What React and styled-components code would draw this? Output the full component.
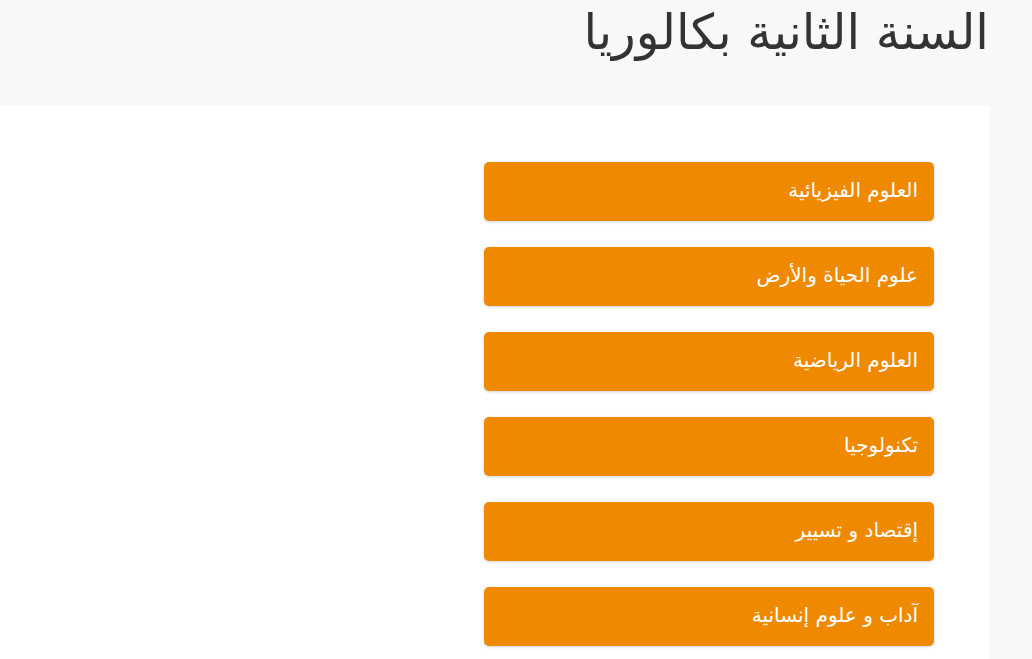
import styled, { createGlobalStyle } from 'styled-components';

const GlobalStyle = createGlobalStyle`
  body {
    margin: 0;
    background: #f8f8f8;
    font-family: "DejaVu Sans", "Noto Sans", sans-serif;
    overflow: hidden;
  }
`;

const Page = styled.div`
  direction: rtl;
  height: 659px;
  padding-right: 43px;
  overflow: hidden;
`;

const Header = styled.header`
  height: 106px;
`;

const Title = styled.h1`
  margin: 0;
  padding-top: 3px;
  font-size: 49px;
  font-weight: normal;
  color: #333;
  line-height: 60px;
`;

const Panel = styled.section`
  background: #fff;
  height: 553px;
  margin-right: -1px;
  box-sizing: border-box;
  padding: 56px 56px 0 0;
  display: flex;
  flex-direction: column;
  gap: 26px;
`;

const SubjectButton = styled.a`
  display: flex;
  align-items: center;
  flex: none;
  width: 450px;
  height: 59px;
  box-sizing: border-box;
  padding: 0 16px 3px 0;
  background: #ef8a00;
  border-radius: 5px;
  box-shadow: 0 1px 3px rgba(0, 0, 0, 0.18);
  color: #fff;
  font-size: 20px;
  text-decoration: none;
  cursor: pointer;
`;

const subjects = [
  'العلوم الفيزيائية',
  'علوم الحياة والأرض',
  'العلوم الرياضية',
  'تكنولوجيا',
  'إقتصاد و تسيير',
  'آداب و علوم إنسانية',
];

const App = () => {
  return (
    <>
      <GlobalStyle />
      <Page>
        <Header>
          <Title>السنة الثانية بكالوريا</Title>
        </Header>
        <Panel>
          {subjects.map((s) => (
            <SubjectButton key={s}>{s}</SubjectButton>
          ))}
        </Panel>
      </Page>
    </>
  );
};

export default App;
